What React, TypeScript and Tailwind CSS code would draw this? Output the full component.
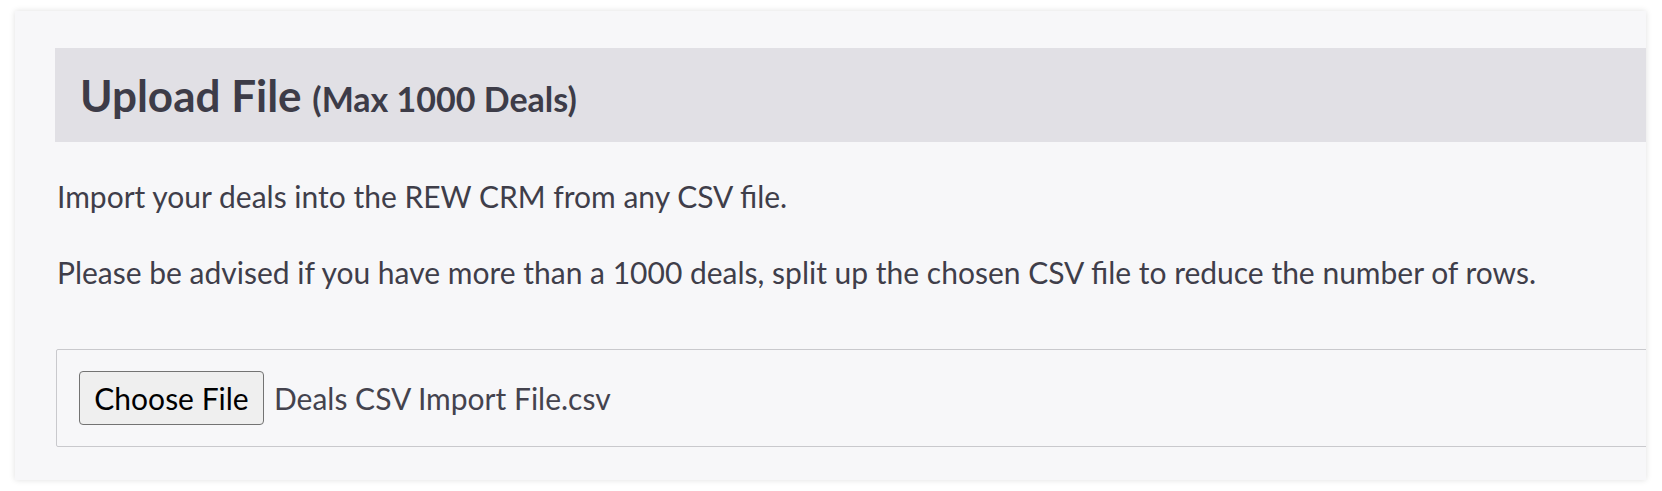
const lato = { fontFamily: '"Lato", "Open Sans", sans-serif' }

export default function App() {
  return (
    <div className="min-h-screen bg-white pt-[11px] pl-[15px] pr-[16px]" style={lato}>
      <div className="overflow-hidden bg-[#f7f7f9] pt-[37px] pb-[33px] pl-[40px] shadow-[0_0_6px_rgba(0,0,0,0.13)]">
        {/* Header */}
        <div className="flex h-[94px] items-center bg-[#e1e0e5] pl-[25px]">
          <h2 className="text-[44px] font-bold leading-none text-[#3d3c48]">
            Upload File{' '}
            <span className="text-[34px]">(Max 1000 Deals)</span>
          </h2>
        </div>

        <p className="mt-[33px] pl-[2px] text-[30px] leading-[42px] text-[#3f3e4a]">
          Import your deals into the REW CRM from any CSV file.
        </p>
        <p className="mt-[34px] pl-[2px] text-[30px] leading-[42px] text-[#3f3e4a]">
          Please be advised if you have more than a 1000 deals, split up the chosen CSV file to reduce the number of rows.
        </p>

        {/* File input */}
        <div className="mt-[56px] -mr-[20px] ml-px rounded-[2px] border border-[#c9c9cd] p-[21px] pl-[22px]">
          <div className="flex items-center gap-[10px]">
            <div className="flex h-[54px] w-[185px] items-center justify-center rounded-[4px] border border-[#737373] bg-[#efefef] text-[30px] text-black">
              Choose File
            </div>
            <span className="text-[30px] text-[#44434e]">Deals CSV Import File.csv</span>
          </div>
        </div>
      </div>
    </div>
  )
}
